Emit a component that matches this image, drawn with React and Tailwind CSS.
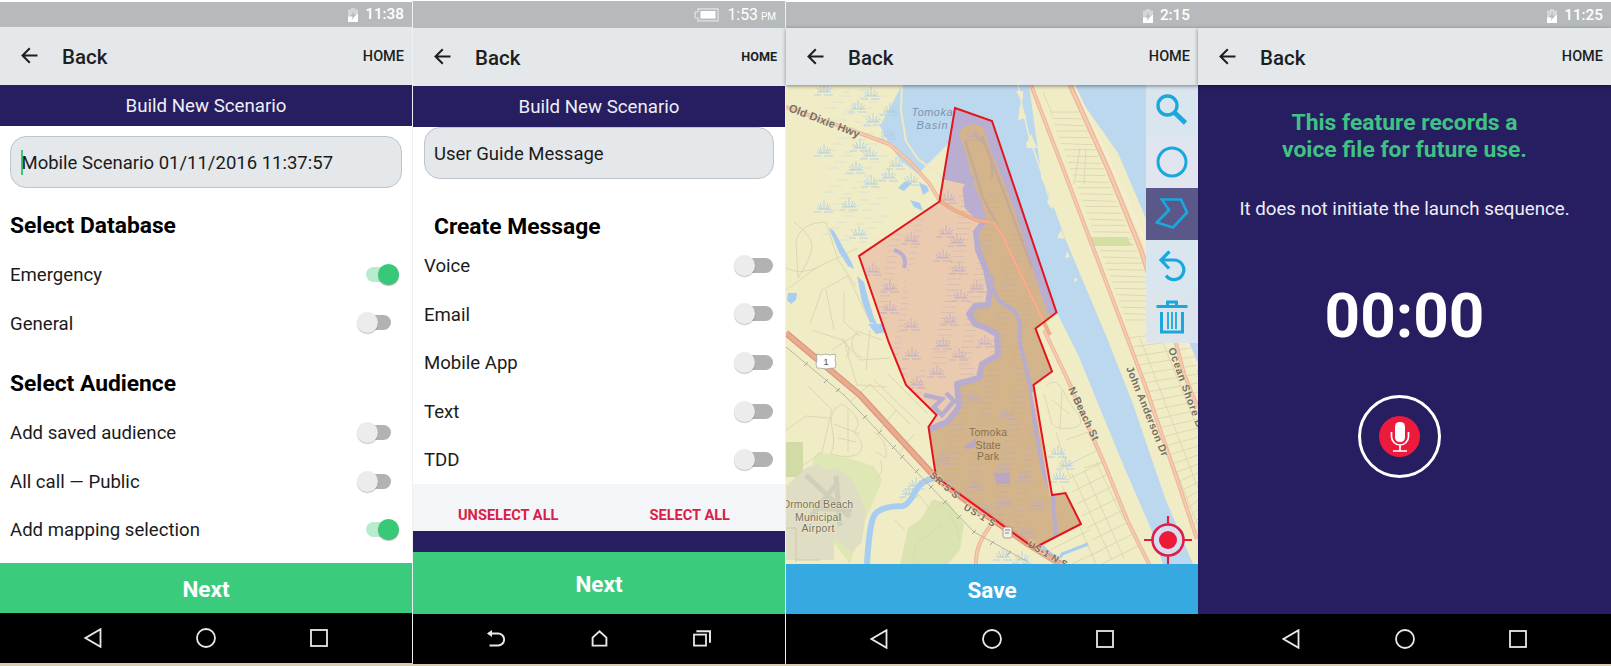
import React from "react";

const FONT = "font-['Roboto','Liberation_Sans',sans-serif]";

function ChargingBattery() {
  return (
    <svg width="10" height="14" viewBox="0 0 10 14">
      <path d="M3 0h4v1.5h3V14H0V1.5h3z" fill="#d3d7d9" />
      <path d="M0 8.5h3.5l3-2-1 3L10 5.5V14H0z" fill="#fff" />
      <path d="M6 3 2.3 8.2h2.2L3.8 12l3.9-5.4H5.4z" fill="#b6babd" />
    </svg>
  );
}

function WideBattery() {
  return (
    <svg width="25" height="14" viewBox="0 0 25 14" fill="none">
      <path d="M4 .8h20v12H4V10H1.2V4H4z" stroke="#e3e6e8" strokeWidth="1.2" />
      <rect x="6.5" y="3" width="15" height="7.6" fill="#fff" />
    </svg>
  );
}

function StatusBar({ time, suffix, battery, className }) {
  return (
    <div className={"flex shrink-0 items-center justify-end bg-[#b6babd] pt-px text-white " + className}>
      {battery}
      <span className={"leading-none " + (suffix ? "ml-2 text-[15.8px]" : "ml-[7px] text-[15.3px] font-medium")}>{time}</span>
      {suffix && <span className="ml-[3px] mt-[3px] text-[10px] leading-none">{suffix}</span>}
    </div>
  );
}

function Header({ className, homeClass }) {
  return (
    <div className={"relative z-10 flex shrink-0 items-center bg-[#e4e8eb] text-[#1c1f22] " + className}>
      <svg width="17" height="17" viewBox="0 0 17 17" fill="none" stroke="#1c1f22" strokeWidth="2">
        <path d="M16.5 8.5H1.5M8.8 1.2 1.5 8.5l7.300 7.300" />
      </svg>
      <span className="ml-[24px] mt-[3px] text-[20.5px] font-medium leading-none">Back</span>
      <span className={"ml-auto mt-[2px] leading-none " + homeClass}>HOME</span>
    </div>
  );
}

function Title({ children, className }) {
  return (
    <div className={"flex shrink-0 items-center justify-center bg-[#261e60] text-[18.7px] leading-none text-[#eeeef6] " + className}>
      {children}
    </div>
  );
}

function Toggle({ on, wide }) {
  if (on) {
    return (
      <div className="flex h-[15px] w-[33px] items-center justify-end rounded-full bg-[#b9ecce]">
        <div className="size-[21px] rounded-full bg-[#37c878] shadow-[0_1px_1px_rgba(0,0,0,0.3)]" />
      </div>
    );
  }
  return (
    <div className={"flex h-[15px] items-center rounded-full " + (wide ? "w-[39px] bg-[linear-gradient(90deg,transparent_30%,#b2b2b2_30%)]" : "mr-2 w-[34px] bg-[linear-gradient(90deg,transparent_30%,#b2b2b2_30%)]")}>
      <div className="size-[21px] shrink-0 rounded-full bg-[#ececec] shadow-[0_1px_1px_rgba(0,0,0,0.25)]" />
    </div>
  );
}

function Row({ label, on, wide }) {
  return (
    <div className="flex h-[48.6px] items-center justify-between">
      <span className="pt-[2px] text-[18.6px] leading-none text-[#1b1b1b]">{label}</span>
      <Toggle on={on} wide={wide} />
    </div>
  );
}

function NavBar() {
  return (
    <div className="flex h-[50px] shrink-0 items-center justify-between bg-black px-[84px]">
      <svg width="18" height="20" viewBox="0 0 18 20" fill="none" stroke="#e8e8e8" strokeWidth="1.8"><path d="M16.5 1.2v17.6L1.5 10z" /></svg>
      <svg width="20" height="20" viewBox="0 0 20 20" fill="none" stroke="#e8e8e8" strokeWidth="1.8"><circle cx="10" cy="10" r="9" /></svg>
      <svg width="18" height="18" viewBox="0 0 18 18" fill="none" stroke="#e8e8e8" strokeWidth="1.8"><rect x="1" y="1" width="16" height="16" /></svg>
    </div>
  );
}

function NavBarAlt() {
  return (
    <div className="flex h-[50px] shrink-0 items-center justify-between bg-black px-[74px]">
      <svg width="18" height="17" viewBox="0 0 18 17" fill="none" stroke="#e8e8e8" strokeWidth="1.9"><path d="M1.5 3.500h9.600a6 6 0 0 1 0 12H2.500" /><path d="M0 3.500 5 0v7z" fill="#e8e8e8" stroke="none" /></svg>
      <svg width="17" height="17" viewBox="0 0 17 17" fill="none" stroke="#e8e8e8" strokeWidth="1.9"><path d="M1.600 15.600V7.600L8.500 1.300l6.900 6.300v8z" /></svg>
      <svg width="18" height="17" viewBox="0 0 18 17" fill="none" stroke="#e8e8e8"><rect x="1" y="4.600" width="12" height="11" strokeWidth="1.800" /><path d="M3.400 1.300H17v11.400" strokeWidth="2" /></svg>
    </div>
  );
}

const TUFTS = [
  [824, 88], [871, 92], [858, 105], [873, 118], [888, 132], [824, 149], [860, 144], [870, 152], [856, 166], [871, 180],
  [896, 162], [911, 178], [889, 174], [824, 205], [849, 203], [859, 231], [890, 108], [909, 490], [916, 482], [1060, 475],
  [1058, 450], [1066, 462], [1003, 553], [1022, 556],
];

const TUFTS_IN = [
  [911, 237], [946, 230], [957, 239], [943, 254], [873, 268], [959, 267], [961, 294], [977, 285], [890, 285],
  [890, 306], [911, 323], [950, 318], [943, 342], [912, 352], [985, 340], [959, 353], [937, 370], [917, 381],
  [948, 196], [974, 395], [1007, 412], [943, 457], [975, 483], [1002, 466], [1025, 474], [1005, 500], [1027, 530],
  [1036, 502], [982, 506], [974, 133],
];

const SELECTION =
  "M955 108 992 121 1056.5 312.5 1035.5 328.5 1052 371.5 1033.5 385 1052 495 1065.5 493 1081 524 1034 548 936 477 928.5 427 936.5 415 906 385 889 343 859 256 939.5 201.5z";

const CREEK =
  "L976 232 978 250 986 270 990 290 988 305 975 306 969 314 975 324 986 328 997 334 998 355 982 364 979 378 957 384 959 407 947 422 928 430";

function Tuft({ x, y, color }) {
  return (
    <path
      d={`M${x - 7} ${y + 4}h14M${x - 10} ${y + 7}h7M${x} ${y + 7}h9M${x} ${y + 4}V${y - 5}M${x - 2} ${y + 4}L${x - 4} ${y - 2}M${x + 2} ${y + 4}L${x + 4} ${y - 2}M${x - 3} ${y + 4}L${x - 7} ${y}M${x + 3} ${y + 4}L${x + 7} ${y}`}
      stroke={color}
      strokeWidth="0.8"
      fill="none"
    />
  );
}

function Road({ d, w = 4 }) {
  return (
    <g fill="none" strokeLinejoin="round">
      <path d={d} stroke="#efb698" strokeWidth={w} />
      <path d={d} stroke="#f3cdb2" strokeWidth={w * 0.45} />
    </g>
  );
}

/* Evenly spaced side streets crossing the barrier island. */
const ISLAND_STREETS = Array.from({ length: 34 }, (_, i) => {
  const y = 112 + i * 6.3;
  const left = 1036 + (y - 85) * 0.365;
  const right = 1072 + (y - 85) * 0.41;
  return `M${left + 4} ${y}L${right - 3} ${y + (i % 3) * 0.6}`;
}).join("");

const LOWER_STREETS = Array.from({ length: 24 }, (_, i) => {
  const y = 338 + i * 9;
  const left = 1126 + (y - 330) * 0.34;
  return `M${left} ${y}L1198 ${y - 9}`;
}).join("");

const GRID_STREETS = Array.from({ length: 9 }, (_, i) => {
  const y = 462 + i * 12;
  return `M${1062 + i * 5} ${y + 6}L${1098 + i * 5} ${y - 12}`;
}).join("");

const DASHES = Array.from({ length: 26 }, (_, r) => {
  const y = 90 + r * 6;
  const x = 822 + ((r * 17) % 24);
  return `M${x} ${y}h12M${x + 20} ${y + 2}h8M${x + 36} ${y}h11`;
}).join("");

const DASHES_IN = Array.from({ length: 60 }, (_, r) => {
  const y = 195 + r * 5.6;
  const x = 868 + ((r * 29) % 30);
  return `M${x} ${y}h10M${x + 22} ${y + 2}h7M${x + 64} ${y}h14M${x + 90} ${y + 1}h12M${x + 120} ${y}h14M${x + 143} ${y + 2}h9`;
}).join("");

const RAIL_TICKS = [[806, 364], [826, 381], [838, 390], [865, 417], [880, 432], [894, 447], [902, 457], [917, 471], [931, 487], [945, 502], [959, 517], [974, 532], [992, 543], [1009, 553]];

function Label({ x, y, children, rotate = 0, length, size = 11, color = "#77715f", anchor = "start", italic, bold }) {
  return (
    <text
      transform={`translate(${x} ${y}) rotate(${rotate})`}
      fontFamily="'Liberation Sans', sans-serif"
      fontSize={size}
      fontWeight={bold ? 700 : 400}
      fontStyle={italic ? "italic" : "normal"}
      fill={color}
      stroke="#f4efd0"
      strokeOpacity="0.55"
      strokeWidth={italic ? 0 : 1.6}
      paintOrder="stroke"
      textAnchor={anchor}
      textLength={length}
    >
      {children}
    </text>
  );
}

function ParkLabel({ y, length, children }) {
  return (
    <text x="988" y={y} fontFamily="'Liberation Sans', sans-serif" fontSize="10.5" fill="#86714f" textAnchor="middle" textLength={length}>
      {children}
    </text>
  );
}

function MapDrawing() {
  return (
    <svg className="block" width="412" height="479" viewBox="786 85 412 479">
      <defs>
        <clipPath id="selection"><path d={SELECTION} /></clipPath>
      </defs>
      <rect x="786" y="85" width="412" height="479" fill="#f0edc6" />

      {/* airport and green spaces */}
      <path d="M786 442h17v35h-17z" fill="#d2dba5" />
      <path d="M818 452l30 6 26 8 8 14-8 20-14 32-10 32-20-26-8-40-10-36z" fill="#dfe8b4" />
      <path d="M786 486l20-18 12-4 6 6 14-2 14 12 14 30-4 32-10 10-18-14v22h-48z" fill="#dfddc4" />
      <path d="M806 475l44 42M808 520l30-38M812 508l40 2M836 476l4 50" stroke="#d0cfbb" strokeWidth="5" fill="none" />
      <path d="M786 528h10v34M796 560h24" stroke="#cfc8a4" fill="none" />
      <path d="M900 564l8-36 14-10 10-18 16 2 16 22-4 26-12 14z" fill="#dbe4b0" />

      {/* local streets */}
      <g stroke="#dcd7b3" strokeWidth="1" fill="none">
        <path d="M794 222q18 14 18 24t-14 32l-2-38q6-18 30-18l12 38 18 26M786 290l30-22 42-20M810 324l12-34 26-14 24 50M786 268q16 8 34-2M844 292v30l16 14M826 290l8 40" />
        <path d="M832 350l28-18 22 8M812 330l30 10 18 20 30-2M845 345l12 40 30 2M870 330l-4 40M842 338q12 12 4 20M858 330q-14 18 4 28" />
        <path d="M808 386l24 24-10 42-20 14M786 430l20-14 24 2M850 402l20-18 40 40M862 394l44 50M874 380l46 44M888 374l40 40M880 430l16-20M900 452l14-18" />
        <path d="M842 404q-14 6-10 24t-2 26q24 6 30-2t-6-20q12-12-12-28zM834 424l26 10M848 408v44M874 432q14 8 12 26l-10-6M880 460q6 12-6 20M838 438l18 4" />
        <path d="M900 500q10-10 20-4l10 14M914 564q-4-22 14-28l14-12M934 500q20 10 26 40M895 520l10 10" />
      </g>

      <path d={DASHES} stroke="#d3dedb" strokeWidth="0.8" fill="none" />

      {/* water */}
      <path d="M902 85h130l16 44 36 94 40 106 34 88 36 94 26 53h-104l-32-74-26-62-30-74-20-60-50-160-40 40-18-14-12-18-8-16z" fill="#bcd8ef" />
      <path d="M1070 85h128v247l-40-85-40-94z" fill="#bcd8ef" />
      <path d="M1178 312l20-10v72z" fill="#bcd8ef" />

      {/* barrier island */}
      <path d="M1029 85h44l42 92 34 84 34 76 15 45v182h-5l-28-66-32-94-26-66-42-100-24-66z" fill="#f0edc6" />
      <path d="M1073 85l46 98 34 76 30 74 15 36" stroke="#f5edcf" strokeWidth="4" fill="none" />
      {/* west bank */}
      <path d="M1036 328l21-15 22 44 22 54 24 58 26 60 12 35h-130l-20-80z" fill="#f0edc6" />
      <g stroke="#dbd6b1" strokeWidth="0.9" fill="none">
        <path d="M1046 386q10-10 18 6t14 22q8 12-6 14t-20-4l-8-30M1052 400l18 14M1062 390l-2 40M1056 360l20 30M1066 440l22-8 14 30-18 6M1056 432l14 46" />
        <path d={GRID_STREETS} />
        <path d="M1072 474l40 86M1084 470l40 88M1096 462l28 58M1062 486l34 78M1090 530l-40 20M1102 550l-30 14" />
        <path d={ISLAND_STREETS} />
        <path d={LOWER_STREETS} />
        <path d="M1140 338l58 150M1158 330l40 100M1164 440l34 86M1043 92l10 24M1080 148l-6 36M1086 148l-2 36" />
      </g>
      <path d="M1087 237h40l5 9h-42z" fill="#d2e0a3" />
      <path d="M1018 85l2 9 3 17 7 29 9 25 10 32" stroke="#f0edc6" strokeWidth="1.500" fill="none" />
      <path d="M1016 91l7 0v9l-3-2zM1020 104l7 14-9 2zM1031 134l6 14-10 0-1-4zM1042 164l6 8v18l-7-12zM1051 193l5 9-4 7-5-7zM1061 230l4 9-8-1zM1067 251l3 6-5 1zM1075 277l3 3-4 2z" fill="#f0edc6" />
      <path d="M902 85l-1 26 5 30 12 18 22 16 8 20" stroke="#f0e8c4" strokeWidth="2" fill="none" />
      <g fill="#a9cdf0">
        <path d="M829 228l5 3 10 18 8 14 2 6-6-3-9-14zM857 276l7 6 4 16 6 20 4 8-8-4-8-20zM788 293l9 0-1 7-5 4-4-4zM898 188l6-6 8 1-8 8zM919 182l8 4 2 5-6 4zM910 200l10 3 3 8-9-4z" />
        <path d="M868 324h14l4 8-10 2z" />
      </g>
      <path d="M935 478q-14 2-20 14t-12 14q-26 0-30 12t-6 46" stroke="#a9cdf0" strokeWidth="6" fill="none" />
      <path d="M1040 544q20 20 22 10l26-10" stroke="#a9cdf0" strokeWidth="3" fill="none" />
      {TUFTS.map(([x, y]) => <Tuft key={x + "-" + y} x={x} y={y} color="#a8cce6" />)}

      {/* selected area */}
      <g clipPath="url(#selection)">
        <rect x="850" y="100" width="240" height="460" fill="#ebcbb0" />
        <path d="M930 100h70l62 215-20 20-40-60-18-54-12-8-4-28-26-6-14-4z" fill="#b9aed2" />
        <path
          d={"M959 133 964 127 974 124 983 127 990 150 1005 185 1017 217 1030 260 1047 312 1060 320 1035 328 1052 371 1034 385 1052 495 1065 493 1081 524 1034 548 936 477 928 430 947 422 959 407 957 384 979 378 982 364 998 355 997 334 986 328 975 324 969 314 975 306 988 305 990 290 986 270 978 250 976 232 986 220 981 200 972 180 968 160z"}
          fill="#d4b48a"
        />
        <path d="M972 176 966 190 968 206 982 221" stroke="#b9aed2" strokeWidth="7" fill="none" strokeLinejoin="round" />
        <path d={"M985 220" + CREEK} stroke="#b8adce" strokeWidth="6" fill="none" strokeLinejoin="round" />
        <path d="M992 275 992 286 998 300 1015 311 1020 324 1020 344 1025 363 1031 390 1035 427 1043 470 1053 497 1056 540" stroke="#b8adce" strokeWidth="4" fill="none" strokeLinejoin="round" />
        <path d="M974 134q20 14 18 44M965 140l18 58 16 30M982 136l24 62 26 70" stroke="#c2a59a" strokeWidth="2.500" fill="none" opacity=".7" />
        <path d="M1034 392l10 50 8 54" stroke="#eec0a3" strokeWidth="5" fill="none" />
        <path d="M994 473h16v11h-14zM963 447l13-8v8l-9 2z" fill="#b8a8c6" />
        <path d="M924 395l18 4-8 8 8 8 12-14-8-8" stroke="#b8adce" strokeWidth="4.500" fill="none" />
        <path d="M894 250q14 4 10 18" stroke="#b9aed2" strokeWidth="4" fill="none" />
        <path d={DASHES_IN} stroke="#b9a9be" strokeWidth="0.7" fill="none" opacity=".55" />
        <ellipse cx="926" cy="286" rx="20" ry="30" fill="#ebcbb0" />
        {TUFTS_IN.map(([x, y]) => <Tuft key={x + "-" + y} x={x} y={y} color="#bcaac4" />)}
      </g>

      {/* major roads */}
      <Road d="M786 107l34 12 42 15 27 10 20 17 20 22 11 18" />
      <path d="M940 201l12 8 24 11 18 3 8 12 48 100" stroke="#efa58a" strokeWidth="4" fill="none" />
      <path d="M940 201l12 8 24 11 18 3 8 12 48 100" stroke="#e7b88e" strokeWidth="1.600" fill="none" />
      <Road d="M1031 85l30 78 28 74 22 58 34 90 32 94 20 60" />
      <Road d="M1070 85l38 84 33 81 7 22" w={5} />
      <Road d="M1170 320l14 54 14 34" />
      <Road d="M1044 330l22 46 36 82 26 64 22 44" />
      <path d="M786 333l74 62 76 83 40 30 52 36 36 22" stroke="#dd9a80" strokeWidth="6.500" fill="none" />
      <path d="M786 333l74 62 76 83 40 30 52 36 36 22" stroke="#ebab8f" strokeWidth="3.600" fill="none" />
      <Road d="M991 525q-16 20-15 39" />
      <path d="M786 347l58 48 66 70 64 67 54 30" stroke="#bab7a2" strokeWidth="1" fill="none" />
      {RAIL_TICKS.map(([x, y]) => <path key={x} d={`M${x - 2} ${y + 2}l4-4`} stroke="#a3a194" />)}

      <path d={SELECTION} fill="none" stroke="#e3151d" strokeWidth="2" />

      {/* highway shields */}
      <path d="M817 354q5 2 9 0 4 2 9 0 1 4 0 6 2 4 0 8-4 0-9 1-5-1-9-1-2-4 0-8-1-3 0-6z" fill="#fff" stroke="#9a978a" strokeWidth=".7" />
      <Label x={826} y={364.500} size={9} anchor="middle" color="#555">1</Label>
      <rect x="1003" y="527" width="9" height="11" rx="2" fill="#f6f0ea" stroke="#a79b8c" />
      <path d="M1005 530h5M1005 533h4" stroke="#8b8178" />

      <Label x={788} y={111} rotate={21} length={75} bold>Old Dixie Hwy</Label>
      <Label x={932} y={116} anchor="middle" length={41} italic color="#7c93ae">Tomoka</Label>
      <Label x={932} y={129} anchor="middle" length={31} italic color="#7c93ae">Basin</Label>
      <ParkLabel y={436} length={38}>Tomoka</ParkLabel>
      <ParkLabel y={448.500} length={25}>State</ParkLabel>
      <ParkLabel y={460} length={22}>Park</ParkLabel>
      <Label x={853} y={508} size={10.500} anchor="end" length={71}>Ormond Beach</Label>
      <Label x={818} y={520.500} size={10.500} anchor="middle" length={46}>Municipal</Label>
      <Label x={818} y={532} size={10.500} anchor="middle" length={33}>Airport</Label>
      <Label x={1068} y={389} rotate={64.500} length={58} size={10.500} bold>N Beach St</Label>
      <Label x={1126} y={368} rotate={68} length={96} size={10.500} bold>John Anderson Dr</Label>
      <Label x={1168} y={349} rotate={70} length={84} size={10.500} bold>Ocean Shore B</Label>
      <Label x={929} y={476} rotate={41} length={35} size={9.500} bold>SR-5 S</Label>
      <Label x={963} y={509} rotate={31} length={35} size={9.500} bold>US-1 S</Label>
      <Label x={1027} y={546} rotate={30} length={44} size={9.500} bold>US-1 N S</Label>

      {/* locate target */}
      <g fill="none" stroke="#de1f49">
        <circle cx="1168" cy="540" r="15.500" fill="#d6dff0" strokeWidth="2.600" />
        <path d="M1168 516v9M1168 555v9M1144 540h9M1183 540h9" strokeWidth="2.200" />
        <circle cx="1168" cy="540" r="9" fill="#ee1a3a" stroke="none" />
      </g>
    </svg>
  );
}

function Tool({ active, tone, children }) {
  return (
    <div className={"flex h-[51.6px] w-[52px] items-center justify-center " + (active ? "bg-[#5a5789]" : tone)}>
      <svg width="34" height="34" viewBox="0 0 34 34" fill="none" stroke="#19a8dd" strokeWidth="3">{children}</svg>
    </div>
  );
}

function MapTools() {
  return (
    <div className="absolute right-0 top-0 flex flex-col">
      <Tool tone="bg-[#d9e5ef]"><circle cx="12.500" cy="11.500" r="9.500" strokeWidth="3.300" /><path d="M19 18l11.500 11" strokeWidth="4.800" /></Tool>
      <Tool tone="bg-[#e0e5ef]"><circle cx="17" cy="17" r="14" /></Tool>
      <Tool active><path d="M7 2.500h19l6 13-14 15L1.800 25.500 14 13z" strokeWidth="2.700" /></Tool>
      <Tool tone="bg-[#d9e5ef]"><path d="M6 11h13a9.800 9.800 0 1 1-8 15.500" strokeWidth="3.200" /><path d="M14.500 2.500 6 11l8 8.500" strokeWidth="3.200" /></Tool>
      <Tool tone="bg-[#dbe5ec]/95"><path d="M1.500 6.500h31M6.500 12v20h21V12M12.500 6V2h9v4" strokeWidth="3" /><path d="M13 12v17M17 12v17M21 12v17" strokeWidth="1.800" /></Tool>
    </div>
  );
}

function ScenarioPanel() {
  return (
    <section className="flex h-[663px] w-[412px] flex-col bg-white pt-[2px]">
      <StatusBar className="h-[25px] pr-[8px]" battery={<ChargingBattery />} time="11:38" />
      <Header className="h-[57.500px] pl-[21px] pr-[8px]" homeClass="text-[14.5px] font-medium" />
      <Title className="h-[41.500px] pt-[2px]">Build New Scenario</Title>
      <div className="flex grow flex-col px-[10px] pt-[10px]">
        <div className="flex h-[52px] shrink-0 items-center rounded-[16px] border border-[#bfc3ca] bg-[#e4e8eb] pl-[10px]">
          <span className="h-[25px] w-[1.500px] bg-[#37c878]" />
          <span className="-ml-px pt-[2px] text-[18.5px] leading-none text-[#1b1b1b]">Mobile Scenario 01/11/2016 11:37:57</span>
        </div>
        <h2 className="mt-[24px] text-[22.800px] font-bold leading-[27px] text-black">Select Database</h2>
        <div className="mt-[11px] pr-[3px]">
          <Row label="Emergency" on />
          <Row label="General" />
        </div>
        <h2 className="mt-[23px] text-[22.800px] font-bold leading-[27px] text-black">Select Audience</h2>
        <div className="mt-[11px] pr-[3px]">
          <Row label="Add saved audience" />
          <Row label="All call — Public" />
          <Row label="Add mapping selection" on />
        </div>
      </div>
      <div className="flex h-[50px] shrink-0 items-center justify-center bg-[#3bcb7c] pt-[3px] text-[22.500px] font-bold leading-none text-white">Next</div>
      <NavBar />
    </section>
  );
}

function MessagePanel() {
  return (
    <section className="flex h-[663px] w-[372px] flex-col bg-white pt-[1px]">
      <StatusBar className="h-[27px] pr-[9px]" battery={<WideBattery />} time="1:53" suffix="PM" />
      <Header className="h-[57.500px] pl-[21px] pr-[8px]" homeClass="text-[12.600px] font-bold" />
      <Title className="h-[41.500px] pt-[2px]">Build New Scenario</Title>
      <div className="flex grow flex-col px-[11px]">
        <div className="flex h-[52px] shrink-0 items-center rounded-[16px] border border-[#bfc3ca] bg-[#e4e8eb] pl-[9px] pt-[3px] text-[18.5px] leading-none text-[#1b1b1b]">
          User Guide Message
        </div>
        <h2 className="mt-[34px] pl-[10px] text-[22.800px] font-bold leading-[27px] text-black">Create Message</h2>
        <div className="mt-px pr-[1px]">
          <Row label="Voice" wide />
          <Row label="Email" wide />
          <Row label="Mobile App" wide />
          <Row label="Text" wide />
          <Row label="TDD" wide />
        </div>
      </div>
      <div className="flex h-[47px] shrink-0 justify-between bg-[#f3f5f8] pl-[45px] pr-[55px] pt-[24px] text-[14.600px] font-bold leading-none text-[#d91f47]">
        <span>UNSELECT ALL</span>
        <span>SELECT ALL</span>
      </div>
      <div className="h-[21px] shrink-0 bg-[#261e60]" />
      <div className="flex h-[62px] shrink-0 items-center justify-center bg-[#3bcb7c] pt-[2px] text-[22.500px] font-bold leading-none text-white">Next</div>
      <NavBarAlt />
    </section>
  );
}

function MapPanel() {
  return (
    <section className="flex h-[664px] w-[412px] flex-col bg-white pt-[2px]">
      <StatusBar className="h-[26px] pr-[8px]" battery={<ChargingBattery />} time="2:15" />
      <Header className="h-[57px] pl-[21px] pr-[8px] shadow-[0_1px_4px_rgba(0,0,0,0.45)]" homeClass="text-[14.5px] font-medium" />
      <div className="relative h-[479px] shrink-0">
        <MapDrawing />
        <MapTools />
      </div>
      <div className="flex h-[50px] shrink-0 items-center justify-center bg-[#36a9e0] pt-[3px] text-[22.500px] font-bold leading-none text-white">Save</div>
      <NavBar />
    </section>
  );
}

function RecordPanel() {
  return (
    <section className="flex h-[664px] w-[413px] flex-col bg-[#261e60]">
      <div className="h-[2px] shrink-0 bg-white" />
      <StatusBar className="h-[26px] pr-[8px]" battery={<ChargingBattery />} time="11:25" />
      <Header className="h-[57px] pl-[21px] pr-[8px] shadow-[0_1px_4px_rgba(0,0,0,0.45)]" homeClass="text-[14.5px] font-medium" />
      <div className="flex grow flex-col items-center text-center">
        <p className="mt-[24px] text-[22.900px] font-bold leading-[27px] text-[#3fc283]">This feature records a<br />voice file for future use.</p>
        <p className="mt-[34px] text-[18.700px] leading-[24px] text-[#eeeef6]">It does not initiate the launch sequence.</p>
        <p className="mt-[59px] text-[62px] font-bold leading-[72px] text-white">00:00</p>
        <div className="mr-[10px] mt-[43px] flex size-[83px] items-center justify-center rounded-full border-[3.500px] border-white">
          <div className="flex size-[41px] items-center justify-center rounded-full bg-[#ec1a3b]">
            <svg width="20" height="32" viewBox="0 0 20 32" fill="none" stroke="#fff" strokeWidth="1.700">
              <rect x="5" y="1" width="10" height="20" rx="4.500" fill="#fff" stroke="none" />
              <path d="M1.500 11v4.500a8.500 8.500 0 0 0 17 0V11M10 24v6M3 30h14" />
            </svg>
          </div>
        </div>
      </div>
      <NavBar />
    </section>
  );
}

export default function App() {
  return (
    <main className={"flex h-[666px] w-[1611px] items-start gap-0 overflow-hidden bg-[linear-gradient(180deg,#eef1f3_662px,#dccdb0_663px)] " + FONT}>
      <ScenarioPanel />
      <div className="w-px shrink-0" />
      <MessagePanel />
      <div className="w-px shrink-0" />
      <MapPanel />
      <RecordPanel />
    </main>
  );
}
